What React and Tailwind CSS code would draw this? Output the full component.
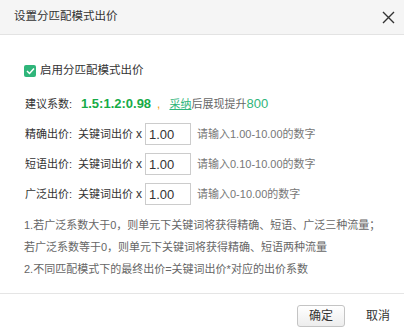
export default function App() {
  const font = { fontFamily: '"Liberation Sans", "Noto Sans CJK SC", sans-serif' };
  const rows = [
    { label: "精确出价", hint: "请输入1.00-10.00的数字" },
    { label: "短语出价", hint: "请输入0.10-10.00的数字" },
    { label: "广泛出价", hint: "请输入0-10.00的数字" },
  ];

  return (
    <div className="w-[404px] h-[335px] bg-white text-[#333] overflow-hidden font-['Liberation_Sans','Noto_Sans_CJK_SC',sans-serif]">
      {/* 标题栏 */}
      <div className="h-[35px] bg-[#f5f5f5] border-b border-[#e3e3e3] pl-[14px] pr-[9px] flex items-center justify-between">
        <span className="text-[11.5px] text-[#333]">设置分匹配模式出价</span>
        <button className="w-[14px] h-[14px] flex items-center justify-center">
          <svg width="13" height="13" viewBox="0 0 13 13">
            <path d="M1 1 L12 12 M12 1 L1 12" stroke="#333" strokeWidth="1.4" fill="none" />
          </svg>
        </button>
      </div>

      {/* 内容 */}
      <div className="pl-[24px] pt-[29px]">
        <label className="flex items-center h-[14px] gap-[4px] text-[11.5px]">
          <span className="w-[12px] h-[12px] rounded-[2px] bg-[#2fb57a] flex items-center justify-center">
            <svg width="9" height="8" viewBox="0 0 9 8">
              <path d="M1 4 L3.5 6.5 L8 1.5" stroke="#fff" strokeWidth="1.5" fill="none" />
            </svg>
          </span>
          启用分匹配模式出价
        </label>

        <div className="mt-[16px] h-[20px] flex items-center text-[11px]">
          <span className="w-[57px] pl-px">建议系数:</span>
          <span className="text-[13px] font-bold text-[#16ab47]">1.5:1.2:0.98</span>
          <span className="ml-[6px] text-[#f29b13] text-[12px]">,</span>
          <a className="ml-[9px] text-[#2fb57a] underline">采纳</a>
          <span className="text-[#666]">后展现提升</span>
          <span className="text-[13px] text-[#2fb57a]">800</span>
        </div>

        <div className="mt-[9px] flex flex-col gap-[8px]">
          {rows.map((r) => (
            <div key={r.label} className="h-[22px] flex items-center text-[11px]">
              <span className="w-[54px] pl-px">{r.label}:</span>
              <span>关键词出价</span>
              <span className="ml-[3px] mr-[3px] text-[12px]">x</span>
              <input
                defaultValue="1.00"
                style={font}
                className="w-[46px] h-[22px] border border-[#ccc] px-[3px] text-[13px] text-[#333] outline-none"
              />
              <span className="ml-[6px] text-[#777]">{r.hint}</span>
            </div>
          ))}
        </div>

        <div className="mt-[9px] text-[11px] leading-[22px] text-[#666]">
          <p>1.若广泛系数大于0，则单元下关键词将获得精确、短语、广泛三种流量；</p>
          <p>若广泛系数等于0，则单元下关键词将获得精确、短语两种流量</p>
          <p>2.不同匹配模式下的最终出价=关键词出价*对应的出价系数</p>
        </div>
      </div>

      {/* 底部按钮 */}
      <div className="mt-[13px] border-t border-[#e5e5e5] pt-[11px] pr-[14px] flex items-center justify-end">
        <button className="w-[48px] h-[22px] rounded-[3px] border border-[#c4c4c4] bg-gradient-to-b from-white to-[#ededed] text-[12px] text-[#333]">
          确定
        </button>
        <button className="ml-[21px] text-[12px] text-[#333]">取消</button>
      </div>
    </div>
  );
}
